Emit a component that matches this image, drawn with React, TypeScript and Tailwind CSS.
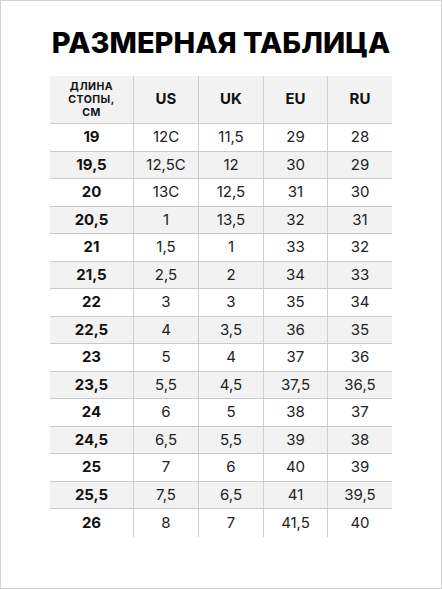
import React from "react";

const rows = [
  ["19", "12C", "11,5", "29", "28"],
  ["19,5", "12,5C", "12", "30", "29"],
  ["20", "13C", "12,5", "31", "30"],
  ["20,5", "1", "13,5", "32", "31"],
  ["21", "1,5", "1", "33", "32"],
  ["21,5", "2,5", "2", "34", "33"],
  ["22", "3", "3", "35", "34"],
  ["22,5", "4", "3,5", "36", "35"],
  ["23", "5", "4", "37", "36"],
  ["23,5", "5,5", "4,5", "37,5", "36,5"],
  ["24", "6", "5", "38", "37"],
  ["24,5", "6,5", "5,5", "39", "38"],
  ["25", "7", "6", "40", "39"],
  ["25,5", "7,5", "6,5", "41", "39,5"],
  ["26", "8", "7", "41,5", "40"],
];

const widths = ["w-[83px]", "w-[65px]", "w-[65px]", "w-[64px]", "w-[65px]"];

export default function App() {
  return (
    <div
      className="w-[442px] h-[589px] border border-[#d2d2d2] bg-white text-[#111] flex flex-col items-center"
      style={{ fontFamily: "Inter, 'Noto Sans', sans-serif" }}
    >
      <h1 className="mt-[24px] h-[36px] text-[29px] leading-[36px] font-extrabold text-black">
        РАЗМЕРНАЯ ТАБЛИЦА
      </h1>

      <div className="mt-[15px] w-[342px] flex flex-col">
        {/* header */}
        <div className="flex h-[48px] bg-[#f2f2f2] border-b border-[#c9c9c9]">
          <div className="w-[83px] flex items-center justify-center text-center text-[10.5px] leading-[13px] font-bold tracking-[0.5px]">
            ДЛИНА
            <br />
            СТОПЫ,
            <br />
            СМ
          </div>
          {["US", "UK", "EU", "RU"].map((h, i) => (
            <div
              key={h}
              className={`${widths[i + 1]} border-l border-[#cfcfcf] flex items-center justify-center text-[15px] font-bold`}
            >
              {h}
            </div>
          ))}
        </div>

        {rows.map((r, ri) => (
          <div
            key={ri}
            className={`flex h-[27.5px] ${ri % 2 === 1 ? "bg-[#f2f2f2]" : "bg-white"} ${
              ri < rows.length - 1 ? "border-b border-[#c9c9c9]" : ""
            }`}
          >
            {r.map((c, ci) => (
              <div
                key={ci}
                className={`${widths[ci]} flex items-center justify-center text-[15px] ${
                  ci === 0 ? "font-bold" : "border-l border-[#cfcfcf] font-normal text-[#222]"
                }`}
              >
                {c}
              </div>
            ))}
          </div>
        ))}
      </div>
    </div>
  );
}
